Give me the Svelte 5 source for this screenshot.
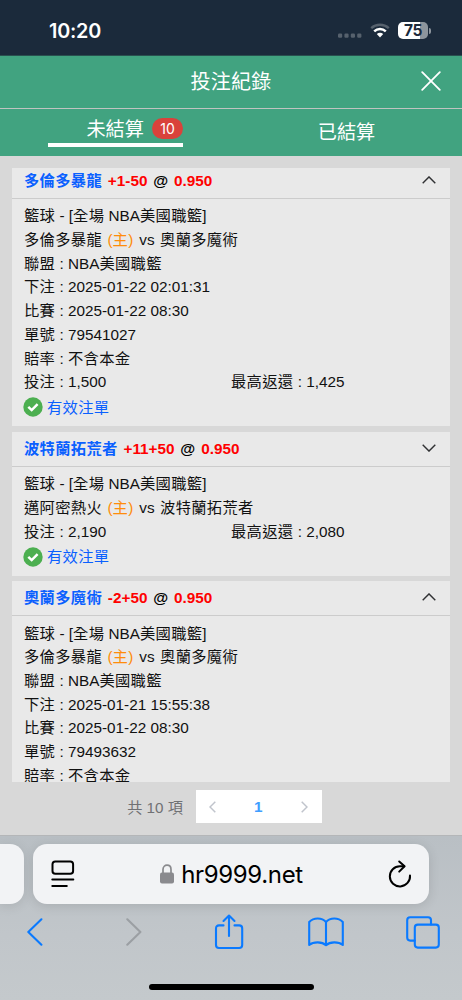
<script lang="ts">
	type Bet = {
		team: string;
		line: string;
		odds: string;
		home: string;
		away: string;
		details: [string, string][];
		stake?: string;
		payout?: string;
		open: boolean;
	};

	const bets: Bet[] = [
		{
			team: '多倫多暴龍',
			line: '+1-50',
			odds: '0.950',
			home: '多倫多暴龍',
			away: '奧蘭多魔術',
			details: [
				['聯盟', 'NBA美國職籃'],
				['下注', '2025-01-22 02:01:31'],
				['比賽', '2025-01-22 08:30'],
				['單號', '79541027'],
				['賠率', '不含本金'],
			],
			stake: '1,500',
			payout: '1,425',
			open: true,
		},
		{
			team: '波特蘭拓荒者',
			line: '+11+50',
			odds: '0.950',
			home: '邁阿密熱火',
			away: '波特蘭拓荒者',
			details: [],
			stake: '2,190',
			payout: '2,080',
			open: false,
		},
		{
			team: '奧蘭多魔術',
			line: '-2+50',
			odds: '0.950',
			home: '多倫多暴龍',
			away: '奧蘭多魔術',
			details: [
				['聯盟', 'NBA美國職籃'],
				['下注', '2025-01-21 15:55:38'],
				['比賽', '2025-01-22 08:30'],
				['單號', '79493632'],
				['賠率', '不含本金'],
			],
			open: true,
		},
	];

	let tab = $state('open');

	// separate han runs from latin runs, they are tracked differently
	const runs = (text: string) => text.match(/[\u4e00-\u9fff]+|[^\u4e00-\u9fff]+/g) ?? [];
	const isHan = (run: string) => /[\u4e00-\u9fff]/.test(run);
</script>

{#snippet mixed(text: string)}{#each runs(text) as run}<span class:han={isHan(run)}>{run}</span>{/each}{/snippet}

<div class="screen">
	<div class="status-bar">
		<span class="time">10:20</span>
		<div class="indicators">
			<svg class="cellular" width="24" height="5" viewBox="0 0 24 5" fill="#56616d">
				<rect x="0" y="0.5" width="4.2" height="4.2" rx="1.2" />
				<rect x="6.4" y="0.5" width="4.2" height="4.2" rx="1.2" />
				<rect x="12.8" y="0.5" width="4.2" height="4.2" rx="1.2" />
				<rect x="19.2" y="0.5" width="4.2" height="4.2" rx="1.2" />
			</svg>
			<svg class="wifi" width="20" height="15" viewBox="0 0 20 15" fill="none">
				<path d="M1.2 5.2C6.2 .6 13.8 .6 18.8 5.2" stroke="#56616d" stroke-width="2.4" />
				<path d="M4.2 8.3C7.5 5.3 12.5 5.3 15.8 8.3" stroke="#fff" stroke-width="2.5" />
				<path d="M10 14.4 6.8 11.1C8.6 9.4 11.4 9.4 13.2 11.1Z" fill="#fff" />
			</svg>
			<div class="battery"><span>75</span></div>
			<i class="battery-cap"></i>
		</div>
	</div>

	<header>
		<h1>投注紀錄</h1>
		<button class="close" aria-label="close">
			<svg width="20" height="20" viewBox="0 0 20 20" stroke="#fff" stroke-width="1.8" stroke-linecap="round">
				<path d="M1.2 1.2 18.8 18.8M18.8 1.2 1.2 18.8" />
			</svg>
		</button>
	</header>

	<nav>
		<button class="tab" onclick={() => (tab = 'open')}>
			<span class="tab-inner" class:active={tab === 'open'}>未結算<em>10</em></span>
		</button>
		<button class="tab" onclick={() => (tab = 'settled')}>
			<span class="tab-inner" class:active={tab === 'settled'}>已結算</span>
		</button>
	</nav>

	<main>
		<div class="list">
			{#each bets as bet}
				<section class="card">
					<div class="card-head">
						<div class="title">
							<span class="han team">{bet.team}</span>
							<span class="red">{bet.line}</span> @ <span class="red">{bet.odds}</span>
						</div>
						<svg width="14" height="8" viewBox="0 0 14 8" fill="none" stroke="#303133" stroke-width="1.4">
							<path d={bet.open ? 'M.7 7.2 7 .9 13.3 7.2' : 'M.7 .8 7 7.1 13.3 .8'} />
						</svg>
					</div>
					<div class="card-body">
						<div class="row">{@render mixed('籃球 - [全場 NBA美國職籃]')}</div>
						<div class="row match">
							<span class="han">{bet.home}</span> <span class="host">(<span class="han">主</span>)</span> vs
							<span class="han">{bet.away}</span>
						</div>
						{#each bet.details as [label, value]}
							<div class="row">{@render mixed(`${label} : ${value}`)}</div>
						{/each}
						{#if bet.stake}
							<div class="row split">
								<div>{@render mixed(`投注 : ${bet.stake}`)}</div>
								<div>{@render mixed(`最高返還 : ${bet.payout}`)}</div>
							</div>
							<div class="valid">
								<svg width="20" height="20" viewBox="0 0 20 20">
									<circle cx="10" cy="10" r="9.7" fill="#4caf50" />
									<path d="M5.3 9.8 8.7 13.1 14.6 7.1" fill="none" stroke="#fff" stroke-width="2.5" />
								</svg>
								<span class="han">有效注單</span>
							</div>
						{/if}
					</div>
				</section>
			{/each}
		</div>

		<div class="pagination">
			<span class="total">共 10 項</span>
			<div class="pager">
				<svg width="7" height="12" viewBox="0 0 7 12" fill="none" stroke="#c0c4cc" stroke-width="1.5">
					<path d="M6.3 .8 1 6 6.3 11.2" />
				</svg>
				<b>1</b>
				<svg width="7" height="12" viewBox="0 0 7 12" fill="none" stroke="#c0c4cc" stroke-width="1.5">
					<path d="M.7 .8 6 6 .7 11.2" />
				</svg>
			</div>
		</div>
	</main>

	<footer>
		<div class="address-row">
			<div class="previous-tab"></div>
			<div class="address">
				<svg width="24" height="28" viewBox="0 0 24 28" fill="none" stroke="#000" stroke-width="2" stroke-linecap="round">
					<rect x="1.5" y="1.5" width="20.6" height="12.2" rx="2.8" />
					<path d="M1.3 19.6H22.3M1.3 26H15.8" />
				</svg>
				<div class="host-name">
					<svg width="14" height="20" viewBox="0 0 14 20">
						<path d="M3 10V5.4C3 -.2 11 -.2 11 5.4V10" fill="none" stroke="#8a8a8e" stroke-width="1.7" />
						<rect x="0" y="8.6" width="14" height="11" rx="2" fill="#8a8a8e" />
					</svg>
					<span>hr9999.net</span>
				</div>
				<svg width="24" height="28" viewBox="0 0 24 28" fill="none" stroke="#000" stroke-width="2" stroke-linecap="round" stroke-linejoin="round">
					<path d="M22 15.5A10.1 10.1 0 1 1 12 6.2H16.2" />
					<path d="M11.2 1.5 16.6 6.2 11.2 11.6" />
				</svg>
			</div>
		</div>

		<div class="toolbar">
			<svg width="16" height="28" viewBox="0 0 16 28" stroke-linejoin="round">
				<path d="M14.4 1.3 1.3 14 14.4 26.7" />
			</svg>
			<svg class="disabled" width="16" height="28" viewBox="0 0 16 28" stroke-linejoin="round">
				<path d="M1.3 1.3 14.4 14 1.3 26.7" />
			</svg>
			<svg width="30" height="36" viewBox="0 0 30 36" stroke-linejoin="round">
				<path d="M9.5 11.4H5Q2 11.4 2 14.4V31Q2 34 5 34H25.2Q28.2 34 28.2 31V14.4Q28.2 11.4 25.2 11.4H20.5" />
				<path d="M15 22V1.7M9.5 7 15 1.5 20.5 7" />
			</svg>
			<svg width="36" height="30" viewBox="0 0 36 30" stroke-linejoin="round">
				<path d="M18 5.2C14 .2 5.5 .4 1.2 5V28C5.5 24.5 14 24.5 18 28.2C22 24.5 30.5 24.5 34.8 28V5C30.5 .4 22 .2 18 5.2V28" />
			</svg>
			<svg width="34" height="33" viewBox="0 0 34 33" stroke-linejoin="round">
				<path d="M8.7 24.6H4.2Q1.2 24.6 1.2 21.6V4.2Q1.2 1.2 4.2 1.2H22Q25 1.2 25 4.2V8.5" />
				<rect x="8.8" y="8.6" width="24" height="23" rx="3" />
			</svg>
		</div>

		<div class="home-indicator"></div>
	</footer>
</div>

<style>
	:global(body) {
		margin: 0;
	}

	.screen {
		display: flex;
		flex-direction: column;
		width: 462px;
		height: 1000px;
		overflow: hidden;
		background: #d8d8d8;
		font-family: 'Liberation Sans', 'Noto Sans CJK TC', sans-serif;
		font-size: 15.3px;
		color: #111;
	}

	button {
		padding: 0;
		border: none;
		background: none;
		color: inherit;
		font: inherit;
	}

	svg {
		display: block;
		flex: none;
	}

	.status-bar {
		display: flex;
		justify-content: space-between;
		box-sizing: border-box;
		height: 56px;
		padding: 19px 33px 0 49px;
		border-bottom: 1px solid #29504f;
		background: #1b2a3b;
		color: #fff;
		font-family: Inter, sans-serif;
		font-weight: 600;
	}

	.time {
		font-size: 19.8px;
		line-height: 25px;
		letter-spacing: -0.2px;
	}

	.indicators {
		display: flex;
		align-items: center;
		height: 23px;
	}

	.cellular {
		margin: 10px 8px 0 0;
	}

	.wifi {
		margin-right: 8px;
	}

	.battery {
		width: 30px;
		height: 17px;
		border-radius: 5px;
		background: linear-gradient(90deg, #fff 75%, #8d959d 75%);
		color: #1b2a3b;
		font-size: 15.5px;
		font-weight: 700;
		line-height: 17px;
		letter-spacing: -0.4px;
		text-align: center;
	}

	.battery-cap {
		width: 2px;
		height: 6px;
		margin: 0 -2px 0 1px;
		border-radius: 0 3px 3px 0;
		background: #8d959d;
	}

	header {
		display: grid;
		grid-template-columns: 1fr auto 1fr;
		align-items: center;
		box-sizing: border-box;
		height: 53px;
		padding: 0 21px;
		border-bottom: 1px solid #c0c4c1;
		background: #41a380;
		color: #fff;
	}

	h1 {
		grid-column: 2;
		margin: 0;
		font-size: 20px;
		font-weight: 400;
		line-height: 50px;
		letter-spacing: 0.3px;
	}

	.close {
		justify-self: end;
		margin-top: -3px;
	}

	nav {
		display: flex;
		height: 47px;
		background: #41a380;
		color: #fff;
		font-size: 19.2px;
		letter-spacing: 0.4px;
	}

	.tab {
		display: flex;
		flex: 1;
		align-items: center;
		justify-content: center;
	}

	.tab-inner {
		margin-bottom: 3px;
	}

	.tab-inner.active {
		display: flex;
		align-items: center;
		justify-content: flex-end;
		box-sizing: border-box;
		width: 135px;
		height: 38px;
		margin-bottom: 9px;
		padding-top: 4px;
		border-bottom: 4px solid #fff;
	}

	em {
		width: 31px;
		height: 21px;
		margin-left: 8px;
		border-radius: 11px;
		background: #d9423b;
		font: 14px/22px Inter, sans-serif;
		letter-spacing: 0;
		text-align: center;
	}

	main {
		display: flex;
		flex-direction: column;
		height: 679px;
		padding: 0 12px;
	}

	.list {
		height: 614px;
		margin-top: 12px;
		overflow: hidden;
	}

	.card {
		margin-bottom: 5.6px;
		background: #e9e9e9;
	}

	/* the list is scrolled by a few pixels */
	.card:first-child {
		margin-top: -4px;
	}

	.card-head {
		display: flex;
		align-items: center;
		justify-content: space-between;
		box-sizing: border-box;
		height: 34.8px;
		padding: 0 14px 2px 12px;
		border-bottom: 1px solid #ccc;
		color: #000;
		font-weight: 700;
	}

	.title {
		padding-top: 2px;
		line-height: 30px;
		white-space: nowrap;
		word-spacing: 1.6px;
	}

	.han {
		letter-spacing: 0.3px;
	}

	.team {
		color: #0a60ff;
	}

	.red {
		color: #f00;
	}

	.card-body {
		padding: 5.6px 12px 5.4px;
	}

	.row {
		height: 23.7px;
		line-height: 23.7px;
		white-space: nowrap;
	}

	.match {
		word-spacing: 1.2px;
	}

	.host {
		margin-right: 0.6px;
		color: #ff8c0a;
	}

	.split {
		display: grid;
		grid-template-columns: 1fr 1fr;
	}

	.valid {
		display: flex;
		align-items: center;
		gap: 4px;
		height: 27px;
		margin-left: -1px;
		color: #0a60ff;
	}

	.valid span {
		margin-top: -3px;
	}

	.pagination {
		display: flex;
		align-items: center;
		justify-content: center;
		height: 49px;
		padding-right: 13px;
	}

	.total {
		margin: -2px 13px 0 0;
		color: #707174;
		font-size: 15.2px;
	}

	.pager {
		display: flex;
		align-items: center;
		justify-content: space-between;
		box-sizing: border-box;
		width: 126px;
		height: 33px;
		padding: 0 14px 0 13px;
		background: #fff;
	}

	.pager b {
		color: #409eff;
	}

	footer {
		display: flex;
		flex-direction: column;
		flex: 1;
		border-top: 1px solid #b4b6b8;
		background: linear-gradient(#b9bfc4, #c1c6ca 60%, #c4c9cc);
	}

	.address-row {
		display: flex;
		gap: 9px;
		height: 60px;
		margin-top: 8px;
	}

	.previous-tab {
		width: 24px;
		border-radius: 0 14px 14px 0;
		background: #f2f3f5;
		box-shadow: 0 2px 12px rgba(0, 0, 0, 0.1);
	}

	.address {
		display: flex;
		align-items: center;
		justify-content: space-between;
		box-sizing: border-box;
		width: 396px;
		padding: 0 17px 0 18px;
		border-radius: 14px;
		background: #f2f3f5;
		box-shadow: 0 2px 12px rgba(0, 0, 0, 0.12);
	}

	.host-name {
		display: flex;
		align-items: center;
		gap: 7px;
		color: #000;
		font: 24px/30px Inter, sans-serif;
		letter-spacing: -0.35px;
	}

	.host-name span {
		padding-top: 2px;
	}

	.toolbar {
		display: grid;
		grid-template-columns: repeat(5, 97px);
		align-items: center;
		justify-content: center;
		justify-items: center;
		height: 56px;
		margin-right: 5px;
		fill: none;
		stroke: #0a7aff;
		stroke-width: 2.1;
		stroke-linecap: round;
	}

	.disabled {
		margin-left: 5px;
		stroke: #9b9fa3;
	}

	.home-indicator {
		width: 165px;
		height: 6px;
		margin: 24px auto 0;
		border-radius: 3px;
		background: #000;
	}
</style>
